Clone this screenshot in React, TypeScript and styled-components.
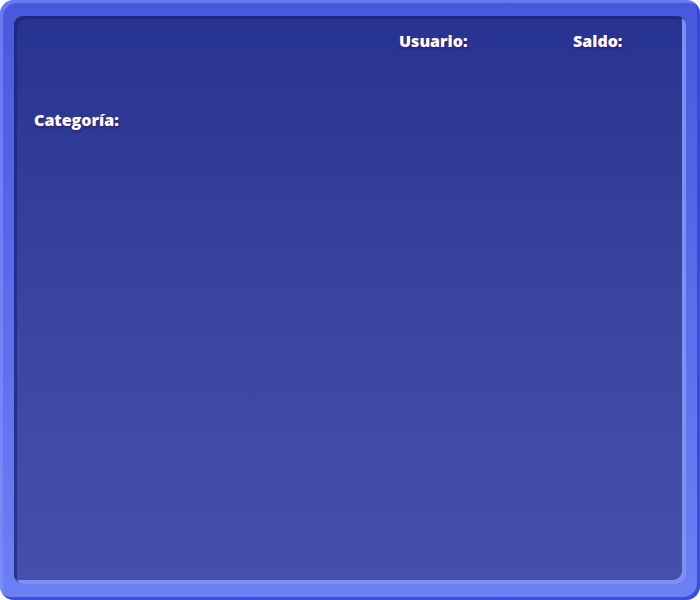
import React from "react";
import styled, { createGlobalStyle } from "styled-components";

const GlobalStyle = createGlobalStyle`
  html, body {
    margin: 0;
    padding: 0;
    width: 700px;
    height: 600px;
    overflow: hidden;
    background: #ffffff;
  }
  * {
    box-sizing: border-box;
  }
`;

const Frame = styled.div`
  width: 700px;
  height: 600px;
  padding: 16px 14px 16px 14px;
  border-radius: 14px;
  background: linear-gradient(180deg, #4858dc 0%, #5a6deb 50%, #6c80f4 100%);
  box-shadow: inset 3px 3px 0 rgba(130, 150, 255, 0.55), inset -3px -3px 0 rgba(50, 66, 210, 0.8);
  display: flex;
`;

const Board = styled.div`
  flex: 1;
  border-radius: 9px;
  background: linear-gradient(180deg, #273390 0%, #3a469f 55%, #4550aa 100%);
  box-shadow: inset 3px 3px 0 rgba(26, 36, 120, 0.65), inset -4px -4px 0 rgba(130, 148, 250, 0.95);
  display: flex;
  flex-direction: column;
  padding: 14px 20px 20px 20px;
  font-family: "Open Sans", "Liberation Sans", sans-serif;
`;

const TopBar = styled.div`
  display: flex;
  justify-content: flex-end;
`;

const Stat = styled.div<{ $width: number }>`
  width: ${({ $width }) => $width}px;
  display: flex;
  gap: 6px;
`;

const Label = styled.span`
  color: #ffffff;
  font-weight: 800;
  font-size: 16px;
  line-height: 22px;
  letter-spacing: 0;
  text-shadow: 1px 2px 2px rgba(70, 20, 90, 0.75);
`;

const CategoryRow = styled.div`
  margin-top: 57px;
`;

export default function App() {
  return (
    <>
      <GlobalStyle />
      <Frame>
        <Board>
          <TopBar>
            <Stat $width={174}>
              <Label>Usuario:</Label>
            </Stat>
            <Stat $width={93}>
              <Label>Saldo:</Label>
            </Stat>
          </TopBar>
          <CategoryRow>
            <Label>Categoría:</Label>
          </CategoryRow>
        </Board>
      </Frame>
    </>
  );
}
